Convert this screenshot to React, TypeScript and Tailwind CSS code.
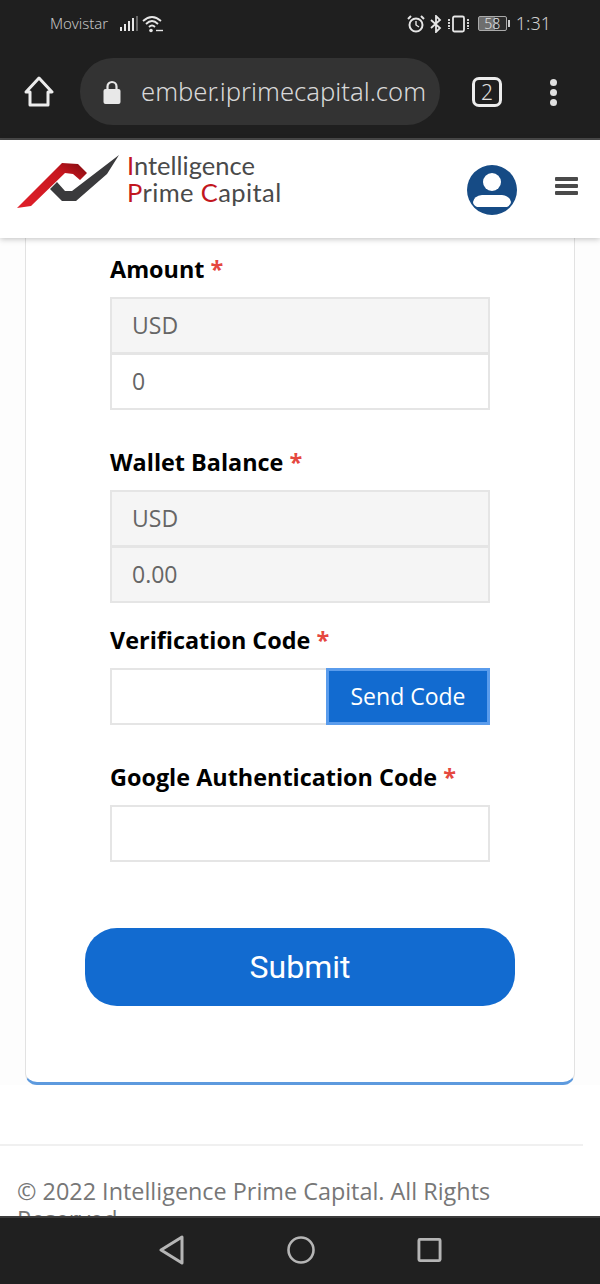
const open = "font-['Open_Sans',sans-serif]";

function Req({ label, className }: { label: string; className: string }) {
  return (
    <div className={`${className} text-[23.4px] leading-[32px] font-bold text-black whitespace-nowrap`}>
      {label} <span className="text-[#e5483f]">*</span>
    </div>
  );
}

function Box({ value, disabled, className = "" }: { value?: string; disabled?: boolean; className?: string }) {
  return (
    <div
      className={`h-[57px] border-2 border-[#e5e5e5] px-[20px] flex items-center text-[23px] text-[#666] ${disabled ? "bg-[#f5f5f5]" : "bg-white"} ${className}`}
    >
      {value}
    </div>
  );
}

function Logo() {
  return (
    <svg width="103" height="54" viewBox="0 0 103 54" className="shrink-0">
      <defs>
        <linearGradient id="red" x1="0" y1="1" x2="1" y2="0">
          <stop offset="0" stopColor="#e0202a" />
          <stop offset="0.7" stopColor="#c8161f" />
          <stop offset="1" stopColor="#7d0c10" />
        </linearGradient>
      </defs>
      <path d="M0 53 L45 8 L61 9 L70 18 L63 25 L56 19 L48 18 L14 51 Z" fill="url(#red)" />
      <path d="M33 34 L40 27 L48 36 L55 36 L102 0 L90 19 L59 46 L45 46 Z" fill="#3a3a3c" />
    </svg>
  );
}

export default function App() {
  return (
    <div className={`w-[600px] h-[1284px] flex flex-col overflow-hidden bg-white ${open}`}>
      {/* Status + browser bar */}
      <div className="h-[140px] shrink-0 bg-[#1f1f1f] border-b-2 border-[#4a4a4a] flex flex-col">
        <div className="h-[46px] flex items-center justify-between pl-[50px] pr-[49px] pt-[1px] text-[#c4c4c4]">
          <div className="flex items-center">
            <span className="font-['Noto_Sans',sans-serif] font-light text-[15px]">Movistar</span>
            <svg width="19" height="16" viewBox="0 0 19 16" className="ml-[12px]">
              <rect x="0" y="11" width="2" height="4" fill="#e6e6e6" />
              <rect x="4" y="8" width="2" height="7" fill="#e6e6e6" />
              <rect x="8" y="5" width="2" height="10" fill="#e6e6e6" />
              <rect x="12" y="2" width="2" height="13" fill="#e6e6e6" />
              <rect x="16" y="0" width="2" height="15" fill="#666" />
            </svg>
            <svg width="22" height="18" viewBox="0 0 22 18" className="ml-[3px]" fill="none" stroke="#e6e6e6" strokeWidth="1.8">
              <path d="M1 6 Q10 -2 19 6" />
              <path d="M4 9 Q10 3 16 9" />
              <path d="M7 12 Q10 9 13 12" />
              <circle cx="9" cy="15.5" r="1.8" fill="#e6e6e6" stroke="none" />
              <path d="M14 15.5 h7" strokeWidth="1.4" />
            </svg>
          </div>
          <div className="flex items-center">
            <svg width="18" height="18" viewBox="0 0 18 18" fill="none" stroke="#e6e6e6" strokeWidth="2">
              <circle cx="9" cy="10" r="6.5" />
              <path d="M9 6 V10 L12 12" strokeWidth="1.4" />
              <path d="M1 4 L4 1 M17 4 L14 1" />
            </svg>
            <svg width="12" height="18" viewBox="0 0 12 18" className="ml-[5px]" fill="none" stroke="#e6e6e6" strokeWidth="1.8">
              <path d="M1 5 L10 13 L6 17 V1 L10 5 L1 13" />
            </svg>
            <svg width="23" height="18" viewBox="0 0 23 18" className="ml-[5px]" fill="none" stroke="#e6e6e6" strokeWidth="1.8">
              <rect x="6" y="1.5" width="11" height="15" rx="1.5" />
              <path d="M2 4 V14 M21 4 V14" strokeDasharray="2 1" />
            </svg>
            <div className="ml-[8px] w-[29px] h-[15px] border border-[#aaa] rounded-[2px] flex items-center justify-center text-[14px] leading-none text-[#e0e0e0] bg-[linear-gradient(90deg,#6e6e6e_58%,#2c2c2c_58%)] font-['Noto_Sans',sans-serif] font-light">
              58
            </div>
            <div className="w-[2px] h-[7px] ml-[1px] bg-[#ccc]" />
            <span className="ml-[6px] font-['Noto_Sans',sans-serif] font-light text-[18px] text-[#d0d0d0]">1:31</span>
          </div>
        </div>
        <div className="flex-1 flex items-start pl-[24px]">
          <svg width="30" height="31" viewBox="0 0 30 31" className="mt-[30px]" fill="none" stroke="#ececec" strokeWidth="3" strokeLinejoin="round">
            <path d="M2 16 L15 2 L28 16 H24 V29 H6 V16 Z" />
          </svg>
          <div className="ml-[26px] mt-[12px] w-[360px] h-[67px] rounded-[33px] bg-[#333333] flex items-center pl-[23px]">
            <svg width="18" height="26" viewBox="0 0 18 26" fill="none">
              <path d="M4.5 12 V7.5 a4.5 4.5 0 0 1 9 0 V12" stroke="#e8e8e8" strokeWidth="2.2" />
              <rect x="0.5" y="10" width="17" height="15" rx="2" fill="#e8e8e8" />
            </svg>
            <span className="ml-[20px] font-['Noto_Sans',sans-serif] font-light text-[25.6px] leading-none text-[#d8d8d8] whitespace-nowrap">
              ember.iprimecapital.com
            </span>
          </div>
          <div className="ml-[32px] mt-[31px] w-[30px] h-[30px] rounded-[7px] border-[3px] border-[#ececec] flex items-center justify-center text-[21px] leading-none text-[#e0e0e0] font-['Noto_Sans',sans-serif] font-light">
            2
          </div>
          <div className="ml-[48px] mt-[33px] flex flex-col gap-[3px]">
            <div className="w-[7px] h-[7px] rounded-full bg-[#e0e0e0]" />
            <div className="w-[7px] h-[7px] rounded-full bg-[#e0e0e0]" />
            <div className="w-[7px] h-[7px] rounded-full bg-[#e0e0e0]" />
          </div>
        </div>
      </div>

      {/* Site header */}
      <div className="relative z-10 h-[98px] shrink-0 bg-white shadow-[0_1px_6px_rgba(0,0,0,0.25)] flex items-start pl-[17px] pr-[22px]">
        <div className="mt-[15px]"><Logo /></div>
        <div className="ml-[7px] mt-[12px] font-['Lato',sans-serif] font-normal text-[25.5px] leading-[27px] text-[#4a4a4a] whitespace-nowrap">
          <div><span className="text-[#c2161e]">I</span>ntelligence</div>
          <div className="tracking-[0.4px]"><span className="text-[#c2161e]">P</span>rime <span className="text-[#c2161e]">C</span>apital</div>
        </div>
        <svg width="50" height="50" viewBox="0 0 50 50" className="ml-auto mt-[25px]">
          <circle cx="25" cy="25" r="25" fill="#164b85" />
          <circle cx="25" cy="17" r="9" fill="#fff" />
          <path d="M6 37 Q7 31 15 30 H35 Q43 31 44 37 Q44 40 40 42 H10 Q6 40 6 37 Z" fill="#fff" />
        </svg>
        <div className="ml-[38px] mt-[37px] flex flex-col gap-[3px]">
          <div className="w-[23px] h-[4px] rounded-[1px] bg-[#4a4a4a]" />
          <div className="w-[23px] h-[4px] rounded-[1px] bg-[#4a4a4a]" />
          <div className="w-[23px] h-[4px] rounded-[1px] bg-[#4a4a4a]" />
        </div>
      </div>

      {/* Scrolling page */}
      <div className="flex-1 min-h-0 overflow-hidden bg-white">
        <div className="bg-[#fdfdfd] px-[25px] h-[847px]">
          <div className="h-[847px] bg-white border-x border-[#e2e2e2] border-b-[3px] border-b-[#5d9ade] rounded-b-[12px] px-[84px] pt-[15px] flex flex-col">
            <Req label="Amount" className="" />
            <Box value="USD" disabled className="mt-[12px]" />
            <Box value="0" className="-mt-px" />
            <Req label="Wallet Balance" className="mt-[36px]" />
            <Box value="USD" disabled className="mt-[12px]" />
            <Box value="0.00" disabled className="-mt-px" />
            <Req label="Verification Code" className="mt-[21px]" />
            <div className="mt-[12px] flex h-[57px]">
              <div className="w-[216px] border-2 border-r-0 border-[#e5e5e5] bg-white" />
              <div className="flex-1 bg-[#126bd0] border-[3px] border-[#5a9cec] text-white text-[23px] flex items-center justify-center">
                Send Code
              </div>
            </div>
            <Req label="Google Authentication Code" className="mt-[36px]" />
            <Box className="mt-[12px]" />
            <div className="mt-[66px] -mx-[25px] h-[78px] rounded-[32px] bg-[#126bd0] flex items-center justify-center font-['Roboto',sans-serif] text-[32px] text-white">
              Submit
            </div>
          </div>
        </div>
        <div className="mt-[59px] w-[583px] border-t-2 border-[#f0f0f0]" />
        <div className="mt-[31px] pl-[17px] w-[583px] text-[23.4px] leading-[28px] text-[#777]">
          © 2022 Intelligence Prime Capital. All Rights Reserved
        </div>
      </div>

      {/* Android nav bar */}
      <div className="relative z-10 h-[68px] shrink-0 bg-[#202020] border-t-2 border-[#3c3c3c] flex items-center justify-center gap-[102px] pb-[2px]">
        <svg width="26" height="30" viewBox="0 0 26 30" fill="none" stroke="#b5b5b5" strokeWidth="3" strokeLinejoin="round">
          <path d="M23 2 V28 L2 15 Z" />
        </svg>
        <svg width="28" height="28" viewBox="0 0 28 28" fill="none" stroke="#b5b5b5" strokeWidth="2.6">
          <circle cx="14" cy="14" r="12.5" />
        </svg>
        <svg width="25" height="26" viewBox="0 0 26 26" fill="none" stroke="#b5b5b5" strokeWidth="3" strokeLinejoin="round">
          <rect x="2" y="2" width="22" height="22" rx="1" />
        </svg>
      </div>
    </div>
  );
}
